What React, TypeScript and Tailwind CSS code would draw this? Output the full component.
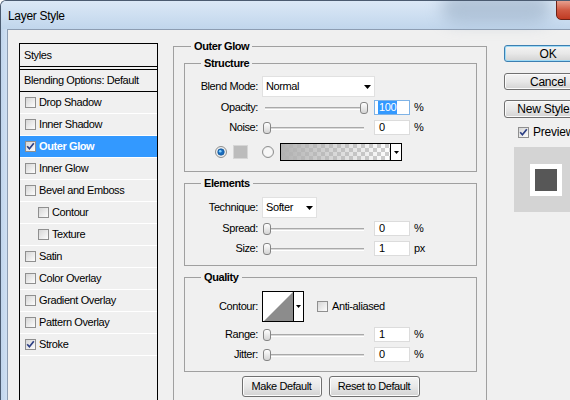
import React from "react";

function CheckBox({ checked = false }: { checked?: boolean }) {
  return (
    <span className="flex h-[11px] w-[11px] shrink-0 items-center justify-center border border-[#8f8f8f] bg-linear-to-br from-[#d6d6d6] to-[#fdfdfd]">
      {checked && (
        <svg width="9" height="9" viewBox="0 0 9 9">
          <path d="M1.2 4.3 L3.4 6.8 L7.8 1.3" fill="none" stroke="#2c3f84" strokeWidth="1.7" />
        </svg>
      )}
    </span>
  );
}

function Radio({ checked = false, className = "" }: { checked?: boolean; className?: string }) {
  return (
    <svg width="12" height="12" viewBox="0 0 12 12" className={`shrink-0 ${className}`}>
      <circle cx="6" cy="6" r="5.5" fill="#e9e9e9" stroke="#8e8f8f" />
      <circle cx="6" cy="6" r="4.3" fill="#f7f7f7" />
      {checked && (
        <>
          <circle cx="6" cy="6" r="3.3" fill="#1a6cbd" stroke="#0f4d8a" strokeWidth="0.6" />
          <circle cx="5.2" cy="5.2" r="1.3" fill="#86d2ff" />
        </>
      )}
    </svg>
  );
}

function StyleRow({
  label,
  checked = false,
  indent = false,
  active = false,
}: {
  label: string;
  checked?: boolean;
  indent?: boolean;
  active?: boolean;
}) {
  return (
    <div
      className={`flex h-[22px] items-center border-b border-white ${
        active ? "bg-[#3399ff] font-bold text-white" : "text-black"
      } ${indent ? "pl-[18px]" : "pl-[5px]"}`}
    >
      <CheckBox checked={checked} />
      <span className="ml-[3px]">{label}</span>
    </div>
  );
}

function Label({ children }: { children: React.ReactNode }) {
  return <span className="w-[73px] shrink-0 text-right">{children}</span>;
}

function Triangle() {
  return (
    <svg width="7" height="4" viewBox="0 0 7 4" className="shrink-0">
      <path d="M0 0 H7 L3.5 4 Z" fill="#000" />
    </svg>
  );
}

function Select({ text, wide = false }: { text: string; wide?: boolean }) {
  return (
    <div
      className={`ml-[4px] flex h-[21px] shrink-0 items-center justify-between border border-[#e1e1e1] bg-white pl-[3px] pr-[3px] ${
        wide ? "w-[113px]" : "w-[55px]"
      }`}
    >
      <span>{text}</span>
      <Triangle />
    </div>
  );
}

function Slider({ full = false }: { full?: boolean }) {
  return (
    <div className="relative ml-[4px] h-full w-[108px] shrink-0">
      <div className="absolute left-[3px] right-[6px] top-[7px] h-[3px] border-b border-t border-b-white border-t-[#a9a9a9] bg-[#d9d9d9]" />
      <div
        className={`absolute top-[2px] h-[12px] w-[8px] rounded-[3px] border border-[#858585] bg-linear-to-b from-white to-[#d4d4d4] ${
          full ? "left-[98px]" : "left-[1px]"
        }`}
      />
    </div>
  );
}

function NumBox({ value, selected = false }: { value: string; selected?: boolean }) {
  return (
    <div
      className={`ml-[4px] flex h-[15px] w-[36px] shrink-0 items-stretch border bg-white pl-[3px] ${
        selected ? "border-[#7fb3e6]" : "border-[#dcdcdc]"
      }`}
    >
      <span
        className={`flex items-center px-[1px] ${selected ? "bg-[#3399ff] text-white" : "text-black"}`}
      >
        {value}
      </span>
    </div>
  );
}

function SliderRow({
  label,
  value,
  unit,
  full = false,
  selected = false,
  className = "",
}: {
  label: string;
  value: string;
  unit: string;
  full?: boolean;
  selected?: boolean;
  className?: string;
}) {
  return (
    <div className={`flex h-[15px] items-center ${className}`}>
      <Label>{label}</Label>
      <Slider full={full} />
      <NumBox value={value} selected={selected} />
      <span className="ml-[4px]">{unit}</span>
    </div>
  );
}

function Legend({ children, outer = false }: { children: React.ReactNode; outer?: boolean }) {
  return (
    <legend className={`px-[3px] font-bold leading-[13px] ${outer ? "ml-[7px]" : "ml-[16px]"}`}>
      {children}
    </legend>
  );
}

function WinButton({ children, wide = false }: { children: React.ReactNode; wide?: boolean }) {
  return (
    <div
      className={`flex h-[21px] items-center justify-center rounded-[3px] border border-[#707070] bg-linear-to-b from-[#f4f4f4] via-[#e8e8e8] to-[#d2d2d2] shadow-[inset_0_0_0_1px_#fcfcfc] ${
        wide ? "w-[91px]" : "w-[80px]"
      }`}
    >
      {children}
    </div>
  );
}

function SideButton({
  children,
  primary = false,
  tall = false,
  className = "",
}: {
  children: React.ReactNode;
  primary?: boolean;
  tall?: boolean;
  className?: string;
}) {
  return (
    <div
      className={`flex items-center justify-center whitespace-nowrap rounded-[3px] border bg-linear-to-b from-[#f4f4f4] via-[#e8e8e8] to-[#d3d3d3] ${
        tall ? "h-[18px]" : "h-[17px]"
      } ${
        primary
          ? "border-[#3c7fb1] shadow-[inset_0_0_0_1px_#9fdaf5]"
          : "border-[#707070] shadow-[inset_0_0_0_1px_#fbfbfb]"
      } ${className}`}
    >
      {children}
    </div>
  );
}

const rows: { label: string; checked?: boolean; indent?: boolean; active?: boolean }[] = [
  { label: "Drop Shadow" },
  { label: "Inner Shadow" },
  { label: "Outer Glow", checked: true, active: true },
  { label: "Inner Glow" },
  { label: "Bevel and Emboss" },
  { label: "Contour", indent: true },
  { label: "Texture", indent: true },
  { label: "Satin" },
  { label: "Color Overlay" },
  { label: "Gradient Overlay" },
  { label: "Pattern Overlay" },
  { label: "Stroke", checked: true },
];

export default function App() {
  return (
    <div className="flex h-[400px] w-[570px] flex-col overflow-hidden rounded-tl-[6px] border-l border-t border-[#4b5b70] bg-[#c7dbf0] font-['Liberation_Sans',Arial,sans-serif] text-[11px] tracking-[-0.4px] text-black">
      {/* Title bar */}
      <div className="relative flex h-[28px] shrink-0 items-center bg-linear-to-b from-[#dbe8f6] to-[#c1d6ec] pl-[7px] text-[12px] tracking-[-0.3px]">
        <div className="absolute left-[440px] top-[-10px] h-[32px] w-[110px] rounded-full bg-[#8ea4bc] opacity-50 blur-[8px]" />
        <span className="relative pt-[1px]">Layer Style</span>
        <div className="absolute left-[555px] top-[-1px] h-[20px] w-[43px] rounded-b-[5px] border border-[#6d2217] bg-linear-to-b from-[#e6a08f] via-[#d05a43] to-[#c03a22]" />
      </div>

      {/* Body */}
      <div className="flex min-h-0 flex-1">
        <div className="w-[6px] shrink-0 bg-linear-to-r from-[#c0d5ec] to-[#d0e0f2]" />
        <div className="flex min-w-0 flex-1 items-start overflow-hidden border-l border-t border-[#8d9db2] bg-[#f0f0f0]">
          {/* Styles list */}
          <div className="ml-[11px] mt-[13px] h-[400px] w-[139px] shrink-0 border-x border-t border-black">
            <div className="flex h-[23px] items-center border-b border-black pl-[4px]">Styles</div>
            <div className="mt-[2px] flex h-[23px] items-center border-y border-black pl-[4px]">
              Blending Options: Default
            </div>
            {rows.map((r) => (
              <StyleRow key={r.label} {...r} />
            ))}
          </div>

          {/* Outer Glow */}
          <fieldset className="ml-[15px] mt-[10px] w-[314px] shrink-0 border border-[#a0a0a0] pb-[10px] pl-[10px] pr-[9px]">
            <Legend outer>Outer Glow</Legend>

            {/* Structure */}
            <fieldset className="mt-[4px] border border-[#a0a0a0] pb-[10px] pt-[6px]">
              <Legend>Structure</Legend>
              <div className="flex h-[21px] items-center">
                <Label>Blend Mode:</Label>
                <Select text="Normal" wide />
              </div>
              <SliderRow className="mt-[3px]" label="Opacity:" value="100" unit="%" full selected />
              <SliderRow className="mt-[5px]" label="Noise:" value="0" unit="%" />
              <div className="mt-[8px] flex h-[18px] items-center">
                <Radio checked className="ml-[30px]" />
                <div className="ml-[6px] h-[14px] w-[15px] shrink-0 border border-[#d6d6d6] bg-[#bcbcbc]" />
                <Radio className="ml-[14px]" />
                <div className="ml-[6px] flex h-[18px] w-[122px] shrink-0 border border-black bg-white">
                  <svg width="109" height="16" className="block shrink-0">
                    <defs>
                      <pattern id="chk" width="8" height="8" patternUnits="userSpaceOnUse">
                        <rect width="8" height="8" fill="#ffffff" />
                        <rect width="4" height="4" fill="#cdcdcd" />
                        <rect x="4" y="4" width="4" height="4" fill="#cdcdcd" />
                      </pattern>
                      <linearGradient id="fade" x1="0" x2="1" y1="0" y2="0">
                        <stop offset="0" stopColor="#b2b2b2" stopOpacity="1" />
                        <stop offset="1" stopColor="#b2b2b2" stopOpacity="0" />
                      </linearGradient>
                    </defs>
                    <rect width="109" height="16" fill="url(#chk)" />
                    <rect width="109" height="16" fill="url(#fade)" />
                  </svg>
                  <div className="flex flex-1 items-center justify-center border-l border-black">
                    <svg width="5" height="3" viewBox="0 0 5 3">
                      <path d="M0 0 H5 L2.5 3 Z" fill="#000" />
                    </svg>
                  </div>
                </div>
              </div>
            </fieldset>

            {/* Elements */}
            <fieldset className="mt-[5px] border border-[#a0a0a0] pb-[9px] pt-[7px]">
              <Legend>Elements</Legend>
              <div className="flex h-[21px] items-center">
                <Label>Technique:</Label>
                <Select text="Softer" />
              </div>
              <SliderRow className="mt-[3px]" label="Spread:" value="0" unit="%" />
              <SliderRow className="mt-[5px]" label="Size:" value="1" unit="px" />
            </fieldset>

            {/* Quality */}
            <fieldset className="mt-[5px] border border-[#a0a0a0] pb-[9px] pt-[7px]">
              <Legend>Quality</Legend>
              <div className="flex h-[31px] items-center">
                <Label>Contour:</Label>
                <div className="ml-[4px] flex h-[31px] w-[42px] shrink-0 border border-black bg-white">
                  <svg width="30" height="29" viewBox="0 0 30 29" className="block shrink-0">
                    <path d="M1 29 L30 0 L30 29 Z" fill="#8c8c8c" />
                  </svg>
                  <div className="flex flex-1 items-center justify-center border-l border-black">
                    <svg width="5" height="3" viewBox="0 0 5 3">
                      <path d="M0 0 H5 L2.5 3 Z" fill="#000" />
                    </svg>
                  </div>
                </div>
                <span className="ml-[13px]">
                  <CheckBox />
                </span>
                <span className="ml-[4px]">Anti-aliased</span>
              </div>
              <SliderRow className="mt-[5px]" label="Range:" value="1" unit="%" />
              <SliderRow className="mt-[5px]" label="Jitter:" value="0" unit="%" />
            </fieldset>

            <div className="mt-[4px] flex justify-center gap-[7px]">
              <WinButton>Make Default</WinButton>
              <WinButton wide>Reset to Default</WinButton>
            </div>
          </fieldset>

          {/* Right column */}
          <div className="ml-[17px] mt-[15px] w-[88px] shrink-0 text-[12px] tracking-[-0.2px]">
            <SideButton primary>OK</SideButton>
            <SideButton className="mt-[11px]">Cancel</SideButton>
            <SideButton tall className="mt-[10px]">
              New Style...
            </SideButton>
            <div className="mt-[8px] flex h-[12px] items-center pl-[14px]">
              <CheckBox checked />
              <span className="ml-[4px]">Preview</span>
            </div>
            <div className="ml-[10px] mt-[9px] flex h-[65px] w-[64px] items-center justify-center bg-[#d4d4d4]">
              <div className="flex h-[32px] w-[32px] items-center justify-center bg-white">
                <div className="h-[22px] w-[22px] bg-[#575757]" />
              </div>
            </div>
          </div>
        </div>
      </div>
    </div>
  );
}
